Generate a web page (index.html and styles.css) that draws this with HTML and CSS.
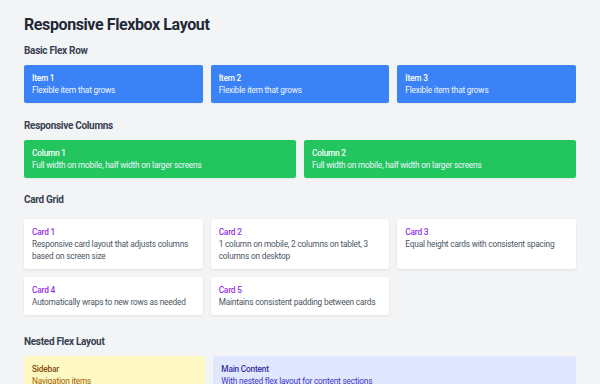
FILE: index.html
```html
<!DOCTYPE html>
<html lang="en">
<head>
<meta charset="utf-8">
<title>Responsive Flexbox Layout</title>
<link rel="stylesheet" href="styles.css">
</head>
<body>
<div class="page">
  <h1 class="title">Responsive Flexbox Layout</h1>

  <section class="section section-basic">
    <h2 class="heading">Basic Flex Row</h2>
    <div class="flex-row">
      <div class="box box-blue"><div class="box-title">Item 1</div><div class="box-text">Flexible item that grows</div></div>
      <div class="box box-blue"><div class="box-title">Item 2</div><div class="box-text">Flexible item that grows</div></div>
      <div class="box box-blue"><div class="box-title">Item 3</div><div class="box-text">Flexible item that grows</div></div>
    </div>
  </section>

  <section class="section section-columns">
    <h2 class="heading">Responsive Columns</h2>
    <div class="flex-row">
      <div class="box box-green"><div class="box-title">Column 1</div><div class="box-text">Full width on mobile, half width on larger screens</div></div>
      <div class="box box-green"><div class="box-title">Column 2</div><div class="box-text">Full width on mobile, half width on larger screens</div></div>
    </div>
  </section>

  <section class="section section-cards">
    <h2 class="heading heading-cards">Card Grid</h2>
    <div class="card-grid">
      <div class="card"><div class="card-title">Card 1</div><div class="card-text">Responsive card layout that adjusts columns based on screen size</div></div>
      <div class="card"><div class="card-title">Card 2</div><div class="card-text">1 column on mobile, 2 columns on tablet, 3 columns on desktop</div></div>
      <div class="card"><div class="card-title">Card 3</div><div class="card-text">Equal height cards with consistent spacing</div></div>
      <div class="card"><div class="card-title">Card 4</div><div class="card-text">Automatically wraps to new rows as needed</div></div>
      <div class="card"><div class="card-title">Card 5</div><div class="card-text">Maintains consistent padding between cards</div></div>
    </div>
  </section>

  <section class="section section-nested">
    <h2 class="heading">Nested Flex Layout</h2>
    <div class="flex-row">
      <div class="box sidebar"><div class="box-title">Sidebar</div><div class="box-text">Navigation items</div></div>
      <div class="box main"><div class="box-title">Main Content</div><div class="box-text">With nested flex layout for content sections</div></div>
    </div>
  </section>
</div>
</body>
</html>
```

FILE: styles.css
```css
* { box-sizing: border-box; }
html, body { margin: 0; padding: 0; }
body {
  background: #f3f4f6;
  font-family: Roboto, "Noto Sans", sans-serif;
  color: #1f2937;
}
.page { padding: 13px 24px; }
.title {
  margin: 0 0 7px;
  font-size: 16px;
  line-height: 24px;
  font-weight: 700;
  letter-spacing: -0.4px;
  color: #1f2937;
}
.section { margin: 0; }
.section-basic { margin-bottom: 16px; }
.section-columns { margin-bottom: 15px; }
.section-cards { margin-bottom: 20px; }
.heading {
  margin: 0 0 7px;
  font-size: 10px;
  line-height: 14px;
  font-weight: 700;
  letter-spacing: -0.3px;
  color: #374151;
}
.heading-cards { margin-bottom: 12px; }
.flex-row { display: flex; gap: 8px; }
.box {
  flex: 1 1 0;
  min-width: 0;
  padding: 7px 8px;
  border-radius: 2px;
  font-size: 8.3px;
  line-height: 12px;
  letter-spacing: -0.2px;
  box-shadow: 0 1px 2px rgba(0,0,0,0.06);
}
.box-title { font-weight: 500; }
.box-blue { background: #3b82f6; color: #fff; }
.box-green { background: #22c55e; color: #fff; }
.box-blue .box-text, .box-green .box-text { color: #f0f6ff; }
.card-grid {
  display: grid;
  grid-template-columns: repeat(3, 1fr);
  gap: 8px;
}
.card {
  background: #fff;
  border-radius: 3px;
  padding: 7px 8px;
  font-size: 8.3px;
  line-height: 12px;
  letter-spacing: -0.2px;
  box-shadow: 0 1px 3px rgba(0,0,0,0.08);
}
.card-title { color: #9333ea; font-weight: 500; }
.card-text { color: #4b5563; }
.sidebar { flex: 0 0 calc((100% - 8px) / 3); background: #fef9c3; box-shadow: none; }
.sidebar .box-title { color: #854d0e; }
.sidebar .box-text { color: #a16207; }
.main { flex: 1 1 0; background: #e0e7ff; box-shadow: none; }
.main .box-title { color: #3730a3; }
.main .box-text { color: #4338ca; }
```
